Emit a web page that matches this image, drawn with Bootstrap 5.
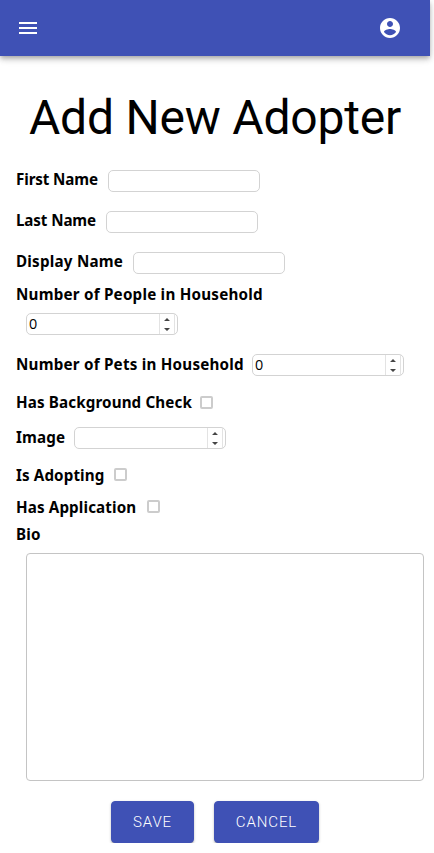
<!DOCTYPE html>
<html lang="en">
<head>
<meta charset="utf-8">
<meta name="viewport" content="width=device-width, initial-scale=1">
<title>Add New Adopter</title>
<link href="https://cdn.jsdelivr.net/npm/bootstrap@5.3.0/dist/css/bootstrap.min.css" rel="stylesheet">
<style>
body{background:#fff;color:#000;font-family:Roboto,sans-serif;overflow:hidden}
.page{width:430px}
.appbar{height:56px;background:#3f51b5;color:#fff;padding:0 28px 0 16px;box-shadow:0 2px 4px -1px rgba(0,0,0,.2),0 4px 5px rgba(0,0,0,.14),0 1px 10px rgba(0,0,0,.12)}
.title{font-size:48px;line-height:56px;font-weight:400;letter-spacing:-.2px;margin:34px 0 14px;height:56px;white-space:nowrap}
.line{display:flex;align-items:center;padding-left:16px;height:41px}
.line label{font:700 15.2px/20px "Noto Sans",sans-serif;letter-spacing:.22px;white-space:nowrap;flex:none;margin-top:-3px}
.line .w-first,.line .w-last{letter-spacing:-.12px}
.line .w-check,.line .w-app,.line .w-image{letter-spacing:.12px}
.line .w-adopt{letter-spacing:.1px}
.h-check label,.h-adopt label,.h-app label,.h-bio label{position:relative;top:1px}
.box{width:152px;height:22px;margin-left:10px;padding:0 2px;border:1px solid #d3d3d3;border-radius:5px;background:#fff;flex:none;font:14.4px/20px "Open Sans",sans-serif;color:#000;outline:0}
.spin{display:flex;align-items:stretch;justify-content:space-between;padding-right:2px;margin-top:0}
.spin input{border:0;padding:0;width:125px;font:inherit;background:none;outline:0}
.steps{width:16px;border:1px solid #e3e3e3;border-width:0 1px}
.tick{appearance:none;width:13px;height:13px;margin:-1px 0 0 10px;border:2px solid #ccc;border-radius:2px;background:#fff}
.bio{display:block;width:398px;height:228px;margin:8px 0 0 26px;border:1px solid #c4c4c4;border-radius:4px;resize:none;outline:0}
.actions{margin-top:20px;gap:20px}
.act{--bs-btn-color:#fff;--bs-btn-bg:#3f51b5;--bs-btn-border-color:#3f51b5;height:42px;padding:0;font-size:15px;font-weight:300;letter-spacing:.9px;border-radius:4px;box-shadow:0 2px 2px -1px rgba(0,0,0,.3),0 1px 3px rgba(0,0,0,.2)}
.save{width:83px}.cancel{width:105px}
.h-people{height:24px}.h-count{height:34px}.h-pets{height:48px}.h-check{height:27px}.h-image{height:44px}.h-adopt{height:30px}.h-app{height:34px}.h-bio{height:21px}
.w-first{width:82px}.w-last{width:80px}.w-display{width:107px}.w-pets{width:226px}.w-check{width:174px}.w-image{width:48px}.w-adopt{width:88px}.w-app{width:121px}
</style>
<script src="https://cdn.jsdelivr.net/npm/bootstrap@5.3.0/dist/js/bootstrap.bundle.min.js"></script>
</head>
<body>
<div class="page">
<header class="appbar d-flex align-items-center justify-content-between">
<svg width="24" height="24" viewBox="0 0 24 24" fill="currentColor"><path d="M3 18h18v-2H3v2zm0-5h18v-2H3v2zm0-7v2h18V6H3z"/></svg>
<svg width="24" height="24" viewBox="0 0 24 24" fill="currentColor"><path d="M12 2C6.48 2 2 6.48 2 12s4.480 10 10 10 10-4.480 10-10S17.520 2 12 2zm0 3c1.660 0 3 1.340 3 3s-1.340 3-3 3-3-1.340-3-3 1.340-3 3-3zm0 14.200c-2.500 0-4.710-1.280-6-3.220.030-1.990 4-3.080 6-3.080 1.990 0 5.970 1.090 6 3.080-1.290 1.940-3.500 3.220-6 3.220z"/></svg>
</header>
<h1 class="title text-center">Add New Adopter</h1>
<form>
<div class="line"><label class="w-first" for="first">First Name</label><input class="box" id="first" type="text"></div>
<div class="line"><label class="w-last" for="last">Last Name</label><input class="box" id="last" type="text"></div>
<div class="line"><label class="w-display" for="display">Display Name</label><input class="box" id="display" type="text"></div>
<div class="line h-people"><label for="people">Number of People in Household</label></div>
<div class="line h-count"><div class="box spin"><input id="people" type="text" value="0"><svg class="steps" height="20" viewBox="0 0 14 20"><path d="M4 7l3-3 3 3zM4 14l3 3 3-3z" fill="#444"/></svg></div></div>
<div class="line h-pets"><label class="w-pets" for="pets">Number of Pets in Household</label><div class="box spin"><input id="pets" type="text" value="0"><svg class="steps" height="20" viewBox="0 0 14 20"><path d="M4 7l3-3 3 3zM4 14l3 3 3-3z" fill="#444"/></svg></div></div>
<div class="line h-check"><label class="w-check" for="check">Has Background Check</label><input class="tick" id="check" type="checkbox"></div>
<div class="line h-image"><label class="w-image" for="image">Image</label><div class="box spin"><input id="image" type="text"><svg class="steps" height="20" viewBox="0 0 14 20"><path d="M4 7l3-3 3 3zM4 14l3 3 3-3z" fill="#444"/></svg></div></div>
<div class="line h-adopt"><label class="w-adopt" for="adopt">Is Adopting</label><input class="tick" id="adopt" type="checkbox"></div>
<div class="line h-app"><label class="w-app" for="app">Has Application</label><input class="tick" id="app" type="checkbox"></div>
<div class="line h-bio"><label for="bio">Bio</label></div>
<textarea class="bio" id="bio"></textarea>
<div class="actions d-flex justify-content-center"><button class="btn act save" type="button">SAVE</button><button class="btn act cancel" type="button">CANCEL</button></div>
</form>
</div>
</body>
</html>
